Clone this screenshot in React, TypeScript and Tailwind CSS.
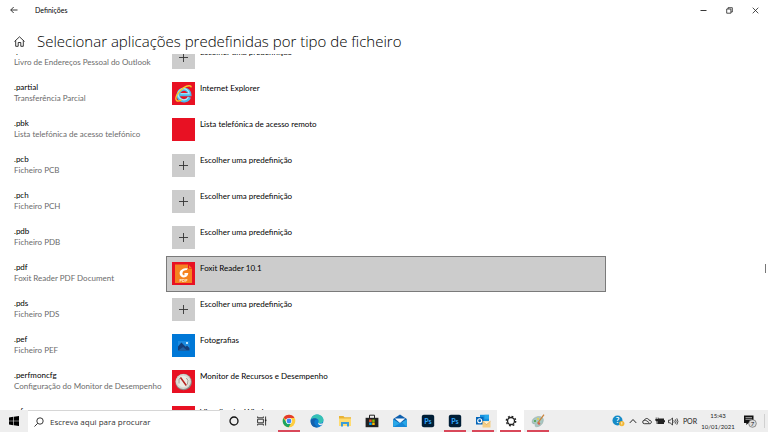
import React, { useState } from "react";
import type { ReactNode } from "react";

type AppKind = "none" | "ie" | "blank" | "foxit" | "photos" | "perfmon";

interface FileType {
  ext: string;
  description: string;
  app: string;
  kind: AppKind;
}

const CHOOSE = "Escolher uma predefinição";

const FILE_TYPES: FileType[] = [
  { ext: ".pab", description: "Livro de Endereços Pessoal do Outlook", app: CHOOSE, kind: "none" },
  { ext: ".partial", description: "Transferência Parcial", app: "Internet Explorer", kind: "ie" },
  { ext: ".pbk", description: "Lista telefónica de acesso telefónico", app: "Lista telefónica de acesso remoto", kind: "blank" },
  { ext: ".pcb", description: "Ficheiro PCB", app: CHOOSE, kind: "none" },
  { ext: ".pch", description: "Ficheiro PCH", app: CHOOSE, kind: "none" },
  { ext: ".pdb", description: "Ficheiro PDB", app: CHOOSE, kind: "none" },
  { ext: ".pdf", description: "Foxit Reader PDF Document", app: "Foxit Reader 10.1", kind: "foxit" },
  { ext: ".pds", description: "Ficheiro PDS", app: CHOOSE, kind: "none" },
  { ext: ".pef", description: "Ficheiro PEF", app: "Fotografias", kind: "photos" },
  { ext: ".perfmoncfg", description: "Configuração do Monitor de Desempenho", app: "Monitor de Recursos e Desempenho", kind: "perfmon" },
  { ext: ".pfm", description: "Ficheiro PFM", app: "Visualizador Windows", kind: "blank" },
];

const TILE_COLORS: Record<AppKind, string> = {
  none: "bg-[#cccccc]",
  ie: "bg-[#e81123]",
  blank: "bg-[#e81123]",
  foxit: "bg-[#e81123]",
  photos: "bg-[#0078d7]",
  perfmon: "bg-[#e81123]",
};

function AppIcon({ kind }: { kind: AppKind }) {
  return (
    <span className={`flex size-[23px] shrink-0 items-center justify-center ${TILE_COLORS[kind]}`}>
      {kind === "none" && (
        <svg viewBox="0 0 23 23" className="size-[23px]" stroke="#333" strokeWidth="0.9">
          <path d="M11.5 7v9M7 11.5h9" />
        </svg>
      )}
      {kind === "ie" && (
        <svg viewBox="0 0 23 23" className="size-[23px]" fill="none">
          <path d="M17.4 15.2A5.8 5.8 0 1 1 17.8 12.6H8" stroke="#4bbcec" strokeWidth="3.3" />
          <path d="M16.4 15.2A5.6 5.6 0 1 1 17.2 11.8H8.6" stroke="#b5e9fb" strokeWidth="1.1" />
          <path d="M4.6 18.6C2.2 16 6 9.4 11.5 5.8c4-2.6 7.6-2.8 7.8-.4M4.6 18.6c1.2 1 3.4.2 5-1" stroke="#f7c82c" strokeWidth="1.4" />
        </svg>
      )}
      {kind === "foxit" && (
        <svg viewBox="0 0 23 23" className="size-[23px]">
          <path d="M3 2.5h13l4 4V21H3z" fill="#f58220" />
          <path d="M16 2.5v4h4z" fill="#e81123" />
          <path d="M17 3.2v2.7h2.7z" fill="#f58220" />
          <path d="M15.8 6.2c-4.8-.3-8.2 1.8-8.2 5 0 2.7 2 4.2 4.3 4.2 2.6 0 4.2-1.7 4.4-4.4h-3.5l-1 1.6h1.6c-.7 1-3 .8-3-1.2 0-2.3 2.4-3.3 4.4-3.3z" fill="#fff" />
          <text x="11.6" y="20.3" textAnchor="middle" fontSize="4.2" fontWeight="700" fill="#fff2df">PDF</text>
        </svg>
      )}
      {kind === "photos" && (
        <svg viewBox="0 0 23 23" className="size-[23px]">
          <rect x="6" y="7" width="11.5" height="9.5" fill="#1b8be0" />
          <path d="M6 16.5v-4l3.4-4 4.2 4.2 1.4-1.3 2.5 2.5v2.6z" fill="#153e78" />
          <path d="M6 16.5l5.2-3.6 3.7 3.6z" fill="#2160a2" />
          <rect x="14" y="8" width="2" height="2" fill="#b9e5ff" />
        </svg>
      )}
      {kind === "perfmon" && (
        <svg viewBox="0 0 23 23" className="size-[23px]">
          <circle cx="11.6" cy="12" r="8.3" fill="#8b8b85" />
          <circle cx="11.3" cy="11.5" r="7.6" fill="#d9d9d2" />
          <circle cx="11.3" cy="11.5" r="5.8" fill="#ecece5" />
          <path d="M7 13.5V9l2-1.4M15.4 14.5l.6-4-1.6-2.5" fill="none" stroke="#8c8a80" strokeWidth="0.8" />
          <path d="M8.5 7.5l5.8 8" stroke="#b5231f" strokeWidth="1.5" />
        </svg>
      )}
    </span>
  );
}

interface RowProps {
  item: FileType;
  selected: boolean;
  onSelect: () => void;
}

function FileTypeRow({ item, selected, onSelect }: RowProps) {
  return (
    <li className="flex h-9 items-start">
      <div className="w-[152px] shrink-0 whitespace-nowrap pt-[6px] leading-[11px]">
        <p className="text-black">{item.ext}</p>
        <p className="text-[#6b6b6b]">{item.description}</p>
      </div>
      <button
        onClick={onSelect}
        aria-label={`${item.ext}: ${item.app}`}
        className={`flex h-9 w-full max-w-[440px] items-start gap-[5px] border p-[5px] text-left ${
          selected ? "border-[#7a7a7a] bg-[#cccccc]" : "border-transparent"
        }`}
      >
        <AppIcon kind={item.kind} />
        <span className="whitespace-nowrap leading-[12px] text-black">{item.app}</span>
      </button>
    </li>
  );
}

interface TaskButtonProps {
  label: string;
  running?: boolean;
  active?: boolean;
  children: ReactNode;
}

function TaskButton({ label, running, active, children }: TaskButtonProps) {
  return (
    <button
      aria-label={label}
      className={`flex h-full flex-1 flex-col items-center px-[3px] ${active ? "bg-white" : ""}`}
    >
      <span className="flex flex-1 items-center pt-0.5">{children}</span>
      <span className={`h-0.5 w-full ${running ? "bg-[#d9485a]" : ""}`} />
    </button>
  );
}

function Photoshop() {
  return (
    <svg viewBox="0 0 14 14" className="size-[14px]">
      <rect x="0.8" y="0.8" width="12.4" height="12.4" rx="2" fill="#001e36" />
      <text x="7" y="9.6" textAnchor="middle" fontSize="7" fontWeight="700" fill="#31a8ff">Ps</text>
    </svg>
  );
}

function Taskbar() {
  return (
    <footer className="flex h-[22px] shrink-0 items-stretch bg-[#eeeeee]">
      <button aria-label="Iniciar" className="flex w-7 shrink-0 items-center justify-center">
        <svg viewBox="0 0 10 10" className="size-[10px]">
          <path d="M0 1.4l4.3-.6v3.9H0zM4.9.7L10 0v4.7H4.9zM0 5.3h4.3v3.9L0 8.6zM4.9 5.3H10V10l-5.1-.7z" />
        </svg>
      </button>
      <label className="flex w-48 items-center gap-1.5 border-t border-[#d6d6d6] bg-white pl-1.5">
        <svg viewBox="0 0 10 10" className="size-[10px] shrink-0" fill="none" stroke="#222" strokeWidth="0.9">
          <circle cx="6" cy="4" r="3.2" />
          <path d="M3.7 6.3L.5 9.5" />
        </svg>
        <input
          type="text"
          aria-label="Procurar"
          placeholder="Escreva aqui para procurar"
          className="w-full min-w-0 bg-transparent font-['Open_Sans',sans-serif] text-[8px] outline-none placeholder:text-[#333]"
        />
      </label>
      <nav aria-label="Aplicações" className="flex w-[332px] items-stretch">
        <TaskButton label="Cortana">
          <svg viewBox="0 0 10 10" className="size-[10px]" fill="none" stroke="#111" strokeWidth="1.3">
            <circle cx="5" cy="5" r="4" />
          </svg>
        </TaskButton>
        <TaskButton label="Vista de tarefas">
          <svg viewBox="0 0 10 10" className="size-[10px]" fill="none" stroke="#222" strokeWidth="0.9">
            <path d="M.6.5v1.3h5.8V.5M.6 9.5V8.2h5.8v1.3M.6 3.2h5.8v3.6H.6zM8.6.5v9" />
            <path d="M7.9 3.6h1.5v1.5H7.9z" fill="#222" stroke="none" />
          </svg>
        </TaskButton>
        <TaskButton label="Google Chrome" running>
          <svg viewBox="0 0 14 14" className="size-[14px]">
            <circle cx="7" cy="7" r="6.3" fill="#ffcd40" />
            <path d="M7 7L1.5 3.9A6.3 6.3 0 0 1 12.5 3.9H7z" fill="#e33b2e" />
            <path d="M1.5 3.9A6.3 6.3 0 0 0 6.6 13.3L9.6 8.5 7 7 4.4 8.6z" fill="#1da462" />
            <circle cx="7" cy="7" r="3.1" fill="#fff" />
            <circle cx="7" cy="7" r="2.4" fill="#4285f4" />
          </svg>
        </TaskButton>
        <TaskButton label="Microsoft Edge">
          <svg viewBox="0 0 14 14" className="size-[14px]">
            <circle cx="7" cy="7" r="6.4" fill="#0c7bd1" />
            <path d="M.8 6C1.6 2.4 4 .6 7.2.6c3.6 0 6.2 2.5 6.2 5.4 0 2-1.5 3.3-3.4 3.3-1.3 0-1.9-.5-1.7-1 .9-1.3.2-3.5-2.3-3.5C3.6 4.8 1.5 5 .8 6z" fill="#35c1b5" />
            <path d="M.8 6c1.3-2.2 5.4-2.3 6.9-.4C5.3 5.2 4 7 4.5 9.2c.5 2.1 2.2 3.5 4.1 3.9C3.5 14.6-.2 10.7.8 6z" fill="#1261ad" />
            <path d="M8.3 8.3c-.6 1.2 2.3 2 4.7.8-.4 1.2-1 1.6-1.6 2-2.4.3-3.9-1-3.1-2.8z" fill="#eee" />
          </svg>
        </TaskButton>
        <TaskButton label="Explorador de Ficheiros">
          <svg viewBox="0 0 14 14" className="size-[14px]">
            <path d="M1 2h4.5l1 1.3H13V12H1z" fill="#e9b335" />
            <path d="M1 4.5h12V12H1z" fill="#ffdc72" />
            <path d="M3 8h8v4.5H9V10H5v2.5H3z" fill="#3d9ddb" />
          </svg>
        </TaskButton>
        <TaskButton label="Microsoft Store">
          <svg viewBox="0 0 14 14" className="size-[14px]">
            <path d="M4.5 4V1.2h5V4" fill="none" stroke="#222" strokeWidth="1" />
            <path d="M.6 3.8h12.8v9.4H.6z" fill="#222" />
            <path d="M4.2 5.5h2.5V8H4.2z" fill="#f25022" />
            <path d="M7.2 5.5h2.5V8H7.2z" fill="#7fba00" />
            <path d="M4.2 8.5h2.5V11H4.2z" fill="#00a4ef" />
            <path d="M7.2 8.5h2.5V11H7.2z" fill="#ffb900" />
          </svg>
        </TaskButton>
        <TaskButton label="Correio">
          <svg viewBox="0 0 14 14" className="size-[14px]">
            <path d="M.2 5L7 .6 13.8 5v8H.2z" fill="#0e5fae" />
            <path d="M1.8 4.6h10.4L7 9z" fill="#f4fbff" />
            <path d="M.2 5.2L7 9.4l6.8-4.2V13H.2z" fill="#28a8e8" />
            <path d="M.2 13L9 8.2 13.8 13z" fill="#1687d6" />
          </svg>
        </TaskButton>
        <TaskButton label="Photoshop">
          <Photoshop />
        </TaskButton>
        <TaskButton label="Photoshop, documento" running>
          <Photoshop />
        </TaskButton>
        <TaskButton label="Outlook" running>
          <svg viewBox="0 0 16 14" className="h-[14px] w-4">
            <path d="M5 .8h9v8H5z" fill="#1490df" />
            <path d="M9.5.8H14v4H9.5z" fill="#28a8ea" />
            <path d="M1 3h7.5v7.5H1z" fill="#0364b8" />
            <circle cx="4.7" cy="6.7" r="2" fill="none" stroke="#fff" strokeWidth="1.1" />
            <path d="M7.5 7.2h8v6.3h-8z" fill="#f5ce85" />
            <path d="M7.5 7.2l4 3.3 4-3.3" fill="#fff0cc" stroke="#c89446" strokeWidth="0.5" />
          </svg>
        </TaskButton>
        <TaskButton label="Definições" running active>
          <svg viewBox="0 0 12 12" className="size-3" fill="none" stroke="#222">
            <circle cx="6" cy="6" r="3.5" strokeWidth="1.3" />
            <circle cx="6" cy="6" r="4.7" strokeWidth="1.4" strokeDasharray="1.85 1.841" />
          </svg>
        </TaskButton>
        <TaskButton label="Paint" running>
          <svg viewBox="0 0 14 14" className="size-[14px]">
            <path d="M1 8c0-3.2 3.5-5.5 7-5.5 3 0 4.8 1.7 4.3 4.5-.6 3.5-3.8 5.8-7 5.8-1.5 0-1.3-1.2-.9-2C5 9.5 1 10.5 1 8z" fill="#a9c7c2" stroke="#879f9d" strokeWidth="0.4" />
            <circle cx="4" cy="7" r="1.1" fill="#4ca64c" />
            <circle cx="7" cy="4.8" r="1.1" fill="#e5ce4e" />
            <circle cx="8" cy="9.5" r="1.2" fill="#d95b50" />
            <path d="M13 .6L6.5 9.4" stroke="#c98138" strokeWidth="1.2" />
          </svg>
        </TaskButton>
      </nav>
      <div className="flex flex-1 items-center justify-end text-[7px] text-[#222]">
        <button aria-label="Ajuda" className="flex w-4 justify-center">
          <svg viewBox="0 0 13 12" className="h-3 w-[13px]">
            <circle cx="5.5" cy="5.5" r="5" fill="#168bc7" />
            <text x="5.5" y="8.4" textAnchor="middle" fontSize="8" fontWeight="700" fill="#fff">?</text>
            <circle cx="9.8" cy="8.6" r="2.6" fill="#f2b632" />
            <path d="M9.8 7v2M9.8 9.5v.7" stroke="#fff" strokeWidth="0.8" />
          </svg>
        </button>
        <button aria-label="Mostrar ícones ocultos" className="flex w-[14px] justify-center">
          <svg viewBox="0 0 8 8" className="size-2" fill="none" stroke="#222" strokeWidth="1">
            <path d="M.8 5.9L4 2.5l3.2 3.4" />
          </svg>
        </button>
        <button aria-label="OneDrive" className="flex w-[13px] justify-center">
          <svg viewBox="0 0 10 8" className="h-2 w-[10px]" fill="none" stroke="#222" strokeWidth="0.9">
            <path d="M2.4 6.7a1.7 1.7 0 0 1 0-3.4C3 1 6.3.8 7 3.2c3-.2 3 3.5.8 3.5zM2.4 3.3c1.5-.2 2.7.6 5 2.7" />
          </svg>
        </button>
        <button aria-label="Bateria" className="flex w-[13px] justify-center">
          <svg viewBox="0 0 10 8" className="h-2 w-[10px]">
            <path d="M3 1.5h6V7H2.6V5.5H3z" fill="#222" />
            <path d="M9 3.3h1v1.9H9zM.8.5h.7v1.7H.8zM2.7.5h.7v1.7h-.7zM.3 1.9h3.5v1.5L2.5 4.5V7h-.9V4.5L.3 3.4z" fill="#222" />
          </svg>
        </button>
        <button aria-label="Volume" className="flex w-[14px] justify-center">
          <svg viewBox="0 0 11 9" className="h-[9px] w-[11px]" fill="none" stroke="#222" strokeWidth="0.8">
            <path d="M.5 3.2h1.6L4.5 1v7L2.1 5.8H.5zM5.8 3.3q.9 1.2 0 2.4M7.3 2.3q1.6 2.2 0 4.4M8.8 1.3q2.3 3.2 0 6.4" />
          </svg>
        </button>
        <button className="w-5 text-center">POR</button>
        <button aria-label="Data e hora" className="w-9 whitespace-nowrap text-center text-[6px] leading-[11px]">
          <span className="block">15:43</span>
          <span className="block">10/01/2021</span>
        </button>
        <button aria-label="Notificações" className="flex w-[29px] justify-center border-r border-[#d0d0d0]">
          <svg viewBox="0 0 14 14" className="size-[14px]">
            <path d="M1 1.5h9.5V9H5.5L3.3 11V9H1z" fill="#111" />
            <path d="M2.5 3.6H9M2.5 5.3H9" stroke="#fff" strokeWidth="0.6" />
            <circle cx="9.5" cy="9.5" r="3.8" fill="#ddd" stroke="#555" strokeWidth="0.6" />
            <text x="9.5" y="11.8" textAnchor="middle" fontSize="6" fill="#111">7</text>
          </svg>
        </button>
        <span className="w-[3px]" />
      </div>
    </footer>
  );
}

export default function App() {
  const [selected, setSelected] = useState(".pdf");

  return (
    <div className="flex h-screen flex-col overflow-hidden bg-white font-['Lato','Open_Sans',sans-serif] text-[8px] text-black">
      {/* Window title bar */}
      <div className="flex h-5 shrink-0 items-center">
        <button aria-label="Anterior" className="flex w-7 justify-center">
          <svg viewBox="0 0 8 8" className="size-2" fill="none" stroke="#222" strokeWidth="0.9">
            <path d="M7.5 4H.8M3.7 1L.7 4l3 3" />
          </svg>
        </button>
        <span className="flex-1 pl-[7px] text-[7px]">Definições</span>
        <button aria-label="Minimizar" className="flex w-[26px] justify-center">
          <svg viewBox="0 0 7 7" className="size-[7px]" stroke="#222" strokeWidth="0.9">
            <path d="M.5 3.5h6" />
          </svg>
        </button>
        <button aria-label="Restaurar" className="flex w-[26px] justify-center">
          <svg viewBox="0 0 7 7" className="size-[7px]" fill="none" stroke="#222" strokeWidth="0.8">
            <path d="M.7 2h4.2v4.2H.7zM2 2V.7h4.3V5H5" />
          </svg>
        </button>
        <button aria-label="Fechar" className="flex w-[26px] justify-center">
          <svg viewBox="0 0 7 7" className="size-[7px]" stroke="#222" strokeWidth="0.8">
            <path d="M.7.7l5.6 5.6M6.3.7L.7 6.3" />
          </svg>
        </button>
      </div>

      <header className="flex h-[34px] shrink-0 items-center gap-3 pl-[14px] pt-2">
        <button aria-label="Página inicial">
          <svg viewBox="0 0 11 11" className="size-[11px]" fill="none" stroke="#222" strokeWidth="0.9">
            <path d="M.5 5.5l5-4.7 5 4.7M1.7 4.5v5.8h2.5V6.5h2.6v3.8h2.5V4.5" />
          </svg>
        </button>
        <h1 className="whitespace-nowrap font-['Open_Sans',sans-serif] text-[15px] font-light leading-5 text-black">
          Selecionar aplicações predefinidas por tipo de ficheiro
        </h1>
      </header>

      <main className="flex min-h-0 flex-1">
        <div className="flex-1 overflow-hidden pl-[14px]">
          {/* Scrolled part way into the first row */}
          <ul className="-mt-[14px]">
            {FILE_TYPES.map((item) => (
              <FileTypeRow
                key={item.ext}
                item={item}
                selected={selected === item.ext}
                onSelect={() => setSelected(item.ext)}
              />
            ))}
          </ul>
        </div>
        <div className="flex w-[3px] items-center pt-[72px]">
          <span className="h-[9px] w-px bg-[#777]" />
        </div>
      </main>

      <Taskbar />
    </div>
  );
}
